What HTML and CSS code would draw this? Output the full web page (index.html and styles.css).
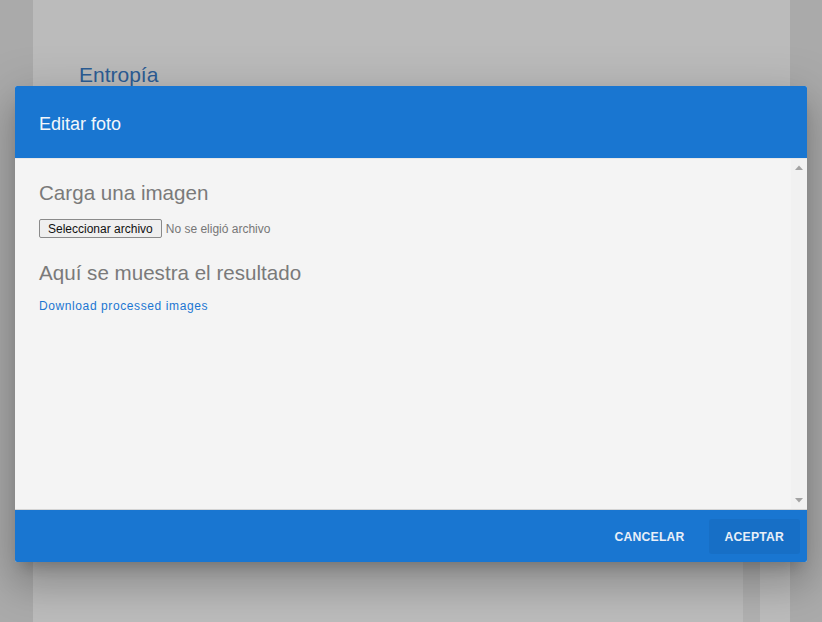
FILE: index.html
```html
<!DOCTYPE html>
<html lang="es">
<head>
<meta charset="utf-8">
<title>Editar foto</title>
<link rel="stylesheet" href="styles.css">
</head>
<body>
<div class="page">
  <div class="main">
    <h2 class="page-title">Entropía</h2>
  </div>
  <div class="side-strip"></div>
  <div class="side"></div>
</div>

<div class="dialog" role="dialog">
  <header class="dialog-header">
    <h1 class="dialog-title">Editar foto</h1>
  </header>
  <section class="dialog-body">
    <div class="body-content">
      <h3 class="section-title">Carga una imagen</h3>
      <div class="file-row">
        <span class="file-btn">Seleccionar archivo</span>
        <span class="file-label">No se eligió archivo</span>
      </div>
      <h3 class="section-title result-title">Aquí se muestra el resultado</h3>
      <a class="download-link" href="#">Download processed images</a>
    </div>
    <div class="scrollbar" aria-hidden="true">
      <svg class="arrow" width="8" height="5" viewBox="0 0 8 5"><path d="M0 5 L4 0.5 L8 5 Z" fill="#a3a3a3"/></svg>
      <svg class="arrow" width="8" height="5" viewBox="0 0 8 5"><path d="M0 0 L8 0 L4 4.5 Z" fill="#a3a3a3"/></svg>
    </div>
  </section>
  <footer class="dialog-footer">
    <button class="action-btn">CANCELAR</button>
    <button class="action-btn primary">ACEPTAR</button>
  </footer>
</div>
</body>
</html>
```

FILE: styles.css
```css
html, body {
  margin: 0;
  padding: 0;
  height: 100%;
}

body {
  background: #aaaaaa;
  font-family: "Liberation Sans", Arial, sans-serif;
  overflow: hidden;
}

.page {
  margin: 0 32px 0 33px;
  height: 100%;
  background: #bbbbbb;
  display: flex;
}

.main {
  width: 710px;
  padding-left: 46px;
  box-sizing: border-box;
}

.page-title {
  margin: 0;
  padding-top: 63px;
  font-size: 21px;
  font-weight: normal;
  line-height: 24px;
  color: #2c5d95;
}

.side-strip {
  width: 17px;
  margin-top: 480px;
  background: #b0b0b0;
}

.side {
  flex: 1;
}

.dialog {
  position: fixed;
  left: 15px;
  top: 86px;
  width: 792px;
  height: 476px;
  display: flex;
  flex-direction: column;
  background: #f4f4f4;
  border-radius: 2px;
  box-shadow: 0 11px 15px -7px rgba(0,0,0,.22),
              0 24px 38px 3px rgba(0,0,0,.15),
              0 9px 46px 8px rgba(0,0,0,.13);
  overflow: hidden;
}

.dialog-header {
  height: 72px;
  box-sizing: border-box;
  padding: 26px 24px 0;
  background: #1976d1;
}

.dialog-title {
  margin: 0;
  font-size: 18px;
  font-weight: normal;
  line-height: 24px;
  color: #f2f6fb;
}

.dialog-body {
  flex: 1;
  display: flex;
  min-height: 0;
  border-top: 1px solid #e8e8e8;
  border-bottom: 1px solid #d4d4d4;
  background: #f4f4f4;
}

.body-content {
  flex: 1;
  padding: 22px 24px 0;
}

.scrollbar {
  width: 16px;
  background: #f1f1f1;
  display: flex;
  flex-direction: column;
  justify-content: space-between;
  align-items: center;
  padding: 6px 0 6px;
}

.arrow {
  display: block;
}

.section-title {
  margin: 0;
  font-size: 20.6px;
  font-weight: normal;
  line-height: 24px;
  color: #7a7a7a;
}

.file-row {
  display: flex;
  align-items: center;
  gap: 4px;
  margin-top: 14px;
}

.file-btn {
  display: inline-flex;
  align-items: center;
  height: 17px;
  padding: 0 8px;
  background: #efefef;
  border: 1px solid #8a8a8a;
  border-radius: 2px;
  font-size: 12px;
  color: #111;
}

.file-label {
  font-size: 12px;
  color: #777;
}

.result-title {
  margin-top: 23px;
}

.download-link {
  display: block;
  margin-top: 13px;
  font-size: 12px;
  line-height: 16px;
  letter-spacing: 0.6px;
  color: #1b76d2;
  text-decoration: none;
}

.dialog-footer {
  height: 52px;
  box-sizing: border-box;
  padding: 9px 7px 0;
  display: flex;
  justify-content: flex-end;
  align-items: flex-start;
  gap: 9px;
  background: #1976d1;
}

.action-btn {
  height: 35px;
  padding: 0 16px;
  border: none;
  border-radius: 3px;
  background: transparent;
  font-family: "Liberation Sans", Arial, sans-serif;
  font-size: 12.2px;
  font-weight: bold;
  letter-spacing: 0.2px;
  color: #e9eff8;
  cursor: pointer;
}

.action-btn.primary {
  margin-left: -1px;
  background: #176fc6;
}
```
